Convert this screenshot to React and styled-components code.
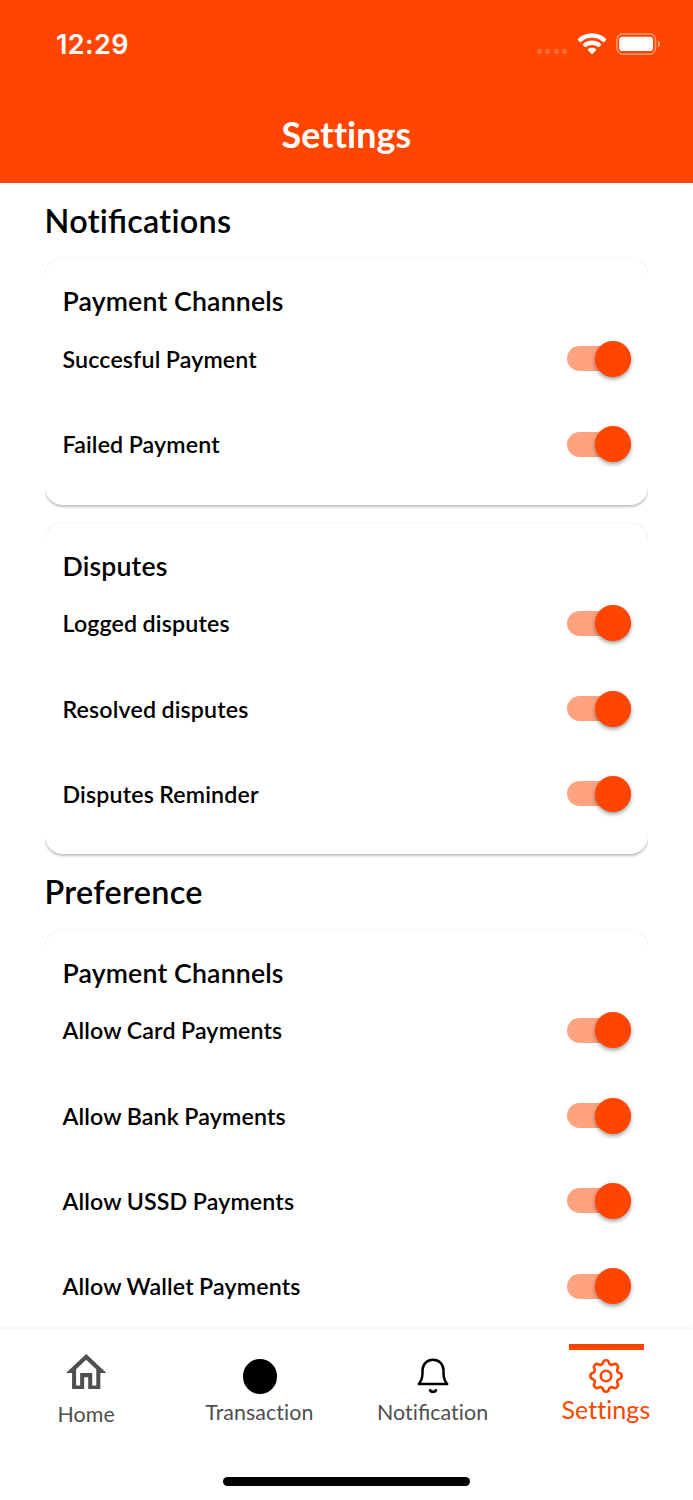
import { useState } from 'react';
import styled, { createGlobalStyle } from 'styled-components';

const sections = [
	{
		title: 'Notifications',
		cards: [
			{ title: 'Payment Channels', items: ['Succesful Payment', 'Failed Payment'] },
			{ title: 'Disputes', items: ['Logged disputes', 'Resolved disputes', 'Disputes Reminder'] },
		],
	},
	{
		title: 'Preference',
		cards: [
			{
				title: 'Payment Channels',
				items: [
					'Allow Card Payments',
					'Allow Bank Payments',
					'Allow USSD Payments',
					'Allow Wallet Payments',
				],
			},
		],
	},
];

// ligatures are off globally, only "fi" keeps its joined form
function Text({ children }) {
	const [start, ...rest] = children.split('fi');

	return (
		<span>
			{start}
			{rest.map((part, i) => (
				<span key={i}>
					<Ligature>fi</Ligature>
					{part}
				</span>
			))}
		</span>
	);
}

function Toggle({ label }) {
	const [on, setOn] = useState(true);

	return (
		<Track role="switch" aria-checked={on} aria-label={label} $on={on} onClick={() => setOn(!on)}>
			<Thumb $on={on} />
		</Track>
	);
}

function SettingsCard({ title, items }) {
	return (
		<Card>
			<CardTitle>{title}</CardTitle>
			{items.map((item) => (
				<Row key={item}>
					<RowLabel>{item}</RowLabel>
					<Toggle label={item} />
				</Row>
			))}
		</Card>
	);
}

function StatusBar() {
	return (
		<Status>
			<Clock>12:29</Clock>
			<StatusIcons>
				<Signal>
					<Dot />
					<Dot />
					<Dot />
					<Dot />
				</Signal>
				<svg width="30" height="22" viewBox="0 0 30 22" fill="#fff">
					<path d="M15 0.3C20.6 0.3 25.6 2.4 29.1 5.9Q29.5 6.4 29.1 6.9L27 9Q26.5 9.4 26 9C23.1 6.2 19.2 4.7 15 4.7S6.9 6.2 4 9Q3.5 9.4 3 9L0.9 6.9Q0.5 6.4 0.9 5.9C4.4 2.4 9.4 0.3 15 0.3Z" />
					<path d="M15 7.5C18.6 7.5 21.8 8.8 24.1 11Q24.6 11.5 24.1 12L21.9 14.1Q21.4 14.5 20.9 14.1C19.3 12.7 17.3 11.9 15 11.9S10.7 12.7 9.1 14.1Q8.6 14.5 8.1 14.1L5.9 12Q5.4 11.5 5.9 11C8.2 8.8 11.4 7.5 15 7.5Z" />
					<path d="M15 14.8C16.6 14.8 18 15.3 19 16.2Q19.5 16.7 19 17.2L15.5 20.8Q15 21.3 14.5 20.8L11 17.2Q10.5 16.7 11 16.2C12 15.3 13.4 14.8 15 14.8Z" />
				</svg>
				<svg width="45" height="22" viewBox="0 0 45 22">
					<rect x="0.9" y="0.9" width="38.6" height="20.2" rx="6" fill="none" stroke="#fff" strokeOpacity="0.4" strokeWidth="1.7" />
					<rect x="3.2" y="3.7" width="33.8" height="14.4" rx="3.4" fill="#fff" />
					<path d="M42 7.8C43.3 8.3 44.1 9.6 44.1 11S43.3 13.7 42 14.2Z" fill="#fff" fillOpacity="0.5" />
				</svg>
			</StatusIcons>
		</Status>
	);
}

function HomeIcon() {
	return (
		<svg width="40.4" height="35.8" viewBox="2 3 20 17" preserveAspectRatio="none" fill="#4f4f4f">
			<path d="M12 5.69l5 4.5V18h-2v-6H9v6H7v-7.81l5-4.5M12 3L2 12h3v8h6v-6h2v6h6v-8h3L12 3z" />
		</svg>
	);
}

function BellIcon() {
	return (
		<svg width="32" height="36" viewBox="0 0 32 36" fill="none" stroke="#000" strokeWidth="2.5" strokeLinecap="round" strokeLinejoin="round">
			<path d="M1.8 26H30.2C27.6 23 26.6 19.8 26.5 15.5V12C26.3 6 21.8 1.7 16 1.7S5.7 6 5.5 12V15.5C5.4 19.8 4.4 23 1.8 26Z" />
			<path d="M13.2 32.4C14.4 34.3 17.6 34.3 18.8 32.4" strokeWidth="2.9" />
		</svg>
	);
}

function GearIcon() {
	return (
		<svg width="34" height="34" viewBox="2.25 2.25 19.5 19.5" fill="none" stroke="#ff4500" strokeWidth="1.5" strokeLinecap="round" strokeLinejoin="round">
			<path d="M10.325 4.317c.426-1.756 2.924-1.756 3.35 0a1.724 1.724 0 002.573 1.066c1.543-.94 3.31.826 2.37 2.37a1.724 1.724 0 001.065 2.572c1.756.426 1.756 2.924 0 3.35a1.724 1.724 0 00-1.066 2.573c.94 1.543-.826 3.31-2.37 2.37a1.724 1.724 0 00-2.572 1.065c-.426 1.756-2.924 1.756-3.35 0a1.724 1.724 0 00-2.573-1.066c-1.543.94-3.31-.826-2.37-2.37a1.724 1.724 0 00-1.065-2.572c-1.756-.426-1.756-2.924 0-3.35a1.724 1.724 0 001.066-2.573c-.94-1.543.826-3.31 2.37-2.37.996.608 2.296.07 2.572-1.065z" />
			<path d="M15 12a3 3 0 11-6 0 3 3 0 016 0z" />
		</svg>
	);
}

export default function App() {
	return (
		<Screen>
			<GlobalStyle />
			<Header>
				<StatusBar />
				<Title>Settings</Title>
			</Header>
			<Content>
				{sections.map((section) => (
					<Section key={section.title}>
						<SectionTitle>
							<Text>{section.title}</Text>
						</SectionTitle>
						{section.cards.map((card) => (
							<SettingsCard key={card.title} title={card.title} items={card.items} />
						))}
					</Section>
				))}
			</Content>
			<TabBar>
				<Tabs>
					<Tab $top={24.5}>
						<HomeIcon />
						<TabLabel $gap={11}>Home</TabLabel>
					</Tab>
					<Tab $top={30}>
						<TransactionIcon />
						<TabLabel $gap={4.5}>Transaction</TabLabel>
					</Tab>
					<Tab $top={29}>
						<BellIcon />
						<TabLabel $gap={4}>
							<Text>Notification</Text>
						</TabLabel>
					</Tab>
					<Tab $top={15}>
						<ActiveLine />
						<GearIcon />
						<TabLabel $gap={2} $active>Settings</TabLabel>
					</Tab>
				</Tabs>
				<HomeIndicator />
			</TabBar>
		</Screen>
	);
}

const GlobalStyle = createGlobalStyle`
	* {
		box-sizing: border-box;
	}

	body {
		margin: 0;
		font-family: Lato, 'Liberation Sans', sans-serif;
		font-variant-ligatures: none;
		background: #fff;
		color: #000;
	}

	svg {
		display: block;
		flex-shrink: 0;
	}
`;

const Ligature = styled.span`
	font-variant-ligatures: common-ligatures;
	letter-spacing: 0;
`;

const Screen = styled.div`
	display: flex;
	flex-direction: column;
	width: 693px;
	height: 1500px;
	overflow: hidden;
	background: #fff;
`;

const Header = styled.header`
	flex-shrink: 0;
	height: 183px;
	background: #ff4500;
	color: #fff;
`;

const Status = styled.div`
	display: flex;
	justify-content: space-between;
	height: 88px;
	padding: 0 32px 0 56px;
`;

const Clock = styled.span`
	font-family: Inter, sans-serif;
	font-weight: 600;
	font-size: 27px;
	line-height: 90px;
	letter-spacing: 0.4px;
`;

const StatusIcons = styled.div`
	display: flex;
	align-items: flex-start;
	padding-top: 33px;
`;

const Signal = styled.div`
	display: flex;
	gap: 3.3px;
	margin: 15.8px 9.5px 0 0;

	& + svg {
		margin-right: 9.5px;
	}
`;

const Dot = styled.span`
	width: 5px;
	height: 5px;
	border-radius: 2px;
	background: rgba(255, 255, 255, 0.22);
`;

const Title = styled.h1`
	margin: 0;
	font-weight: 700;
	font-size: 35.8px;
	line-height: 94px;
	letter-spacing: 0.1px;
	text-align: center;
`;

const Content = styled.main`
	flex: 1;
	min-height: 0;
	overflow: hidden;
	padding: 0 45px;
`;

const Section = styled.section`
	display: flex;
	flex-direction: column;
`;

const SectionTitle = styled.h2`
	margin: 0 0 -1px -0.5px;
	font-weight: 600;
	font-size: 32.4px;
	line-height: 76.2px;
	letter-spacing: 0.3px;
`;

const Card = styled.div`
	display: flex;
	flex-direction: column;
	padding: 28px 17px 18px 17.5px;
	border-radius: 18px;
	background: #fff;
	box-shadow: 0 1.8px 2.5px rgba(0, 0, 0, 0.25), 0 0 1px rgba(0, 0, 0, 0.03);
	/* keeps the shadow from spilling over the sides */
	clip-path: inset(-2px 0 -8px 0);

	& + & {
		margin-top: 18px;
	}
`;

const CardTitle = styled.h3`
	margin: 0 0 -1px;
	font-weight: 600;
	font-size: 26.7px;
	line-height: 31px;
	letter-spacing: 0.15px;
`;

const Row = styled.div`
	display: flex;
	align-items: center;
	justify-content: space-between;
	height: 85.25px;
`;

const RowLabel = styled.span`
	font-weight: 600;
	font-size: 23.2px;
	line-height: 28px;
	letter-spacing: 0.15px;
	word-spacing: -0.6px;
`;

const Track = styled.button`
	display: flex;
	align-items: center;
	justify-content: ${({ $on }) => ($on ? 'flex-end' : 'flex-start')};
	width: 64px;
	height: 25px;
	padding: 0;
	border: none;
	border-radius: 13px;
	background: ${({ $on }) => ($on ? '#ffa280' : '#c4c4c4')};
	cursor: pointer;
`;

const Thumb = styled.span`
	flex-shrink: 0;
	width: 36px;
	height: 36px;
	border-radius: 50%;
	background: ${({ $on }) => ($on ? '#ff4500' : '#fafafa')};
	box-shadow: 0 2px 4px rgba(0, 0, 0, 0.4);
`;

const TabBar = styled.nav`
	display: flex;
	flex-direction: column;
	align-items: center;
	flex-shrink: 0;
	height: 171px;
	background: #fff;
	box-shadow: 0 -1px 4px rgba(0, 0, 0, 0.07);
	z-index: 1;
`;

const Tabs = styled.div`
	display: flex;
	width: 100%;
	height: 147.5px;
`;

const Tab = styled.div`
	display: flex;
	flex-direction: column;
	align-items: center;
	flex: 1;
	padding-top: ${({ $top }) => $top}px;
`;

const TabLabel = styled.span`
	margin-top: ${({ $gap }) => $gap}px;
	margin-right: 1px;
	font-size: ${({ $active }) => ($active ? '25px' : '21.4px')};
	line-height: 28px;
	letter-spacing: 0.06px;
	color: ${({ $active }) => ($active ? '#ff4500' : '#4f4f4f')};
`;

const TransactionIcon = styled.span`
	width: 34.5px;
	height: 34.5px;
	border-radius: 50%;
	background: #000;
`;

const ActiveLine = styled.span`
	width: 74.5px;
	height: 5.5px;
	margin-bottom: 9.5px;
	background: #ff4500;
`;

const HomeIndicator = styled.span`
	width: 247px;
	height: 9px;
	border-radius: 5px;
	background: #000;
`;
